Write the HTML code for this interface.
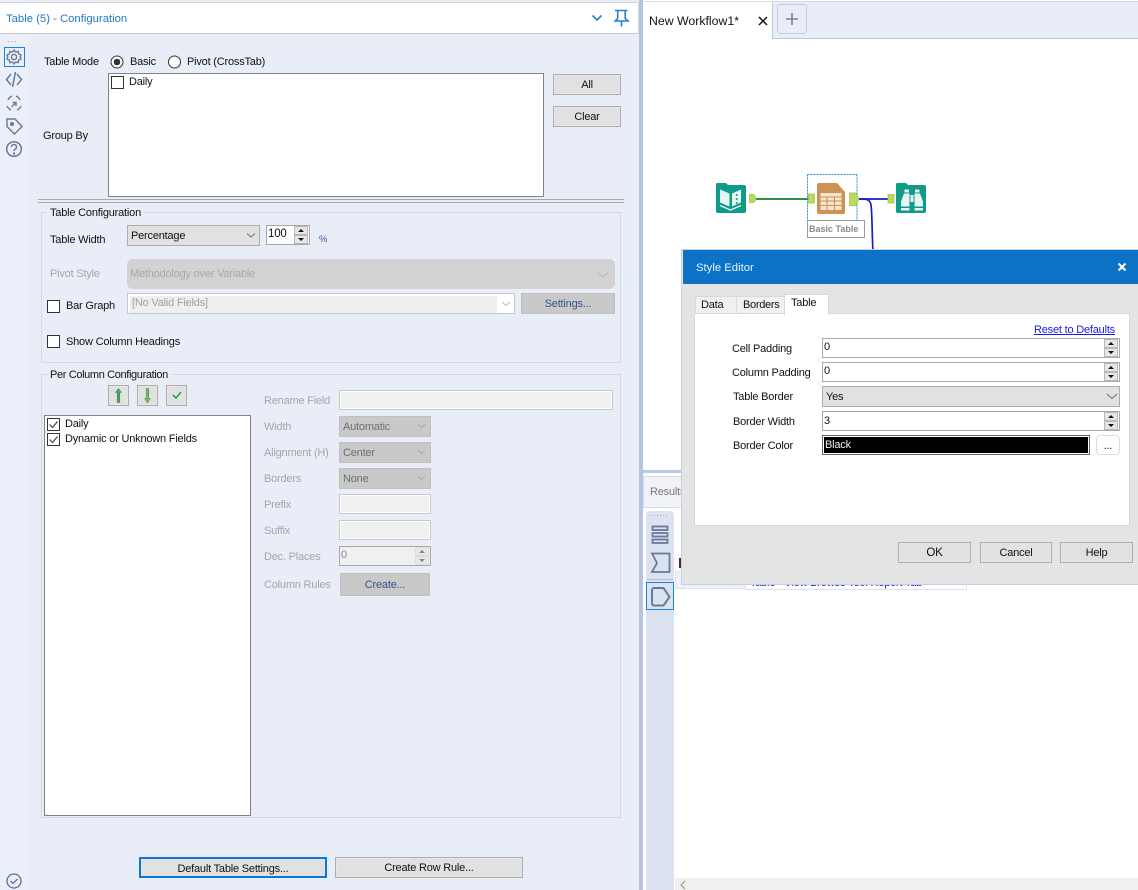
<!DOCTYPE html>
<html><head><meta charset="utf-8"><style>
html,body{margin:0;padding:0}
body{width:1138px;height:890px;position:relative;overflow:hidden;background:#fff;font-family:"Liberation Sans",sans-serif;font-size:11px;color:#111;letter-spacing:-.2px}
.b{position:absolute;box-sizing:border-box}
.t{position:absolute;white-space:nowrap;line-height:14px;margin-top:1px}
.g{color:#a5a5a5}
.btn{position:absolute;box-sizing:border-box;background:#e1e1e1;border:1px solid #adadad;text-align:center;box-shadow:inset 0 0 0 1px #e6e6e6}
.dis{position:absolute;box-sizing:border-box;background:#c9c9c9;border:1px solid #c0c0c0;color:#6f6f6f;padding-left:3px}
.in{position:absolute;box-sizing:border-box;background:#f0f0f0;border:1px solid #c8c8c8;box-shadow:inset 0 0 0 1px #fff}
.cb{position:absolute;box-sizing:border-box;width:13px;height:13px;background:#fff;border:1px solid #333}
svg{position:absolute;overflow:visible}
</style></head><body>
<!-- LEFT PANEL -->
<div class="b" style="left:0;top:0;width:639px;height:890px;background:#e9edf8"></div>
<div class="b" style="left:0;top:0;width:28px;height:890px;background:#ebeffa;border-right:1px solid #eef1fa"></div>
<div class="b" style="left:0;top:2px;width:639px;height:32px;background:#fff;border-top:1px solid #d4d4d4;border-bottom:1px solid #c9c9c9;border-right:1px solid #d4d4d4"></div>
<div class="t" style="left:6px;top:11px;color:#1f7ac4;font-size:11.300px;letter-spacing:0">Table (5) - Configuration</div>
<svg style="left:0;top:0" width="639" height="34" fill="none" stroke="#2a7fd0" stroke-width="1.600"><path d="M592.500 15.500l4.500 4.500 4.500-4.500"/><path d="M615 10.500h12.500M617.700 10.500v8l-2.500 2.500h12.800l-2.800-2.500v-8M621.500 21v5.500"/></svg>
<div class="b" style="left:639px;top:0;width:4px;height:890px;background:#b4c4e2"></div>
<!-- side icons -->
<div class="t" style="left:7px;top:34px;color:#8a8fa0;font-size:9px;letter-spacing:1px;line-height:9px">...</div>
<div class="b" style="left:4px;top:47px;width:21px;height:20px;border:1px solid #1a84dc"></div>
<svg style="left:0;top:45px" width="28" height="120" fill="none" stroke="#6a7a96" stroke-width="1.400">
<circle cx="14" cy="12" r="2.600"/><path d="M14 5l1.500 2 2.600-.6.600 2.600 2.300 1-.8 2 .8 2-2.300 1-.6 2.600-2.600-.6-1.500 2-1.500-2-2.600.6-.6-2.600-2.300-1 .8-2-.8-2 2.300-1 .6-2.600 2.600.6z"/>
<path d="M11 29l-4.500 5.500 4.500 5.500M17 29l4.500 5.500-4.500 5.500M15.500 27l-3 15" stroke-width="1.500"/>
<path d="M8 55a7.500 7.500 0 0 1 4-4M16 51a7.500 7.500 0 0 1 4 4M21 61a7.500 7.500 0 0 1-4 4M11 65a7.500 7.500 0 0 1-4-4M11.500 62l4.500-4.500M12.500 57.500H16V61"/>
<path d="M7 74h8l7 7.500-7.500 7.500-7.500-7.500z"/><circle cx="12" cy="79" r="1.300" fill="#6a7a96"/>
<circle cx="14" cy="104" r="7.300" stroke-width="1.500"/><path d="M11.500 102a2.500 2.500 0 1 1 3.800 2.100c-1 .6-1.300 1-1.300 2"/><circle cx="14" cy="108.500" r=".5" fill="#6a7a96"/>
</svg>
<svg style="left:0;top:870px" width="28" height="20" fill="none" stroke="#5e6f90" stroke-width="1.300"><circle cx="14" cy="11" r="7"/><path d="M10.500 11l2.500 2.500 4.500-4.500"/></svg>

<div class="t" style="left:44px;top:54px">Table Mode</div>
<svg style="left:110px;top:54.500px" width="80" height="14"><circle cx="7" cy="7" r="6" fill="#fff" stroke="#333"/><circle cx="7" cy="7" r="3.300" fill="#333"/><circle cx="64.500" cy="7" r="6" fill="#fff" stroke="#333"/></svg>
<div class="t" style="left:130px;top:54px">Basic</div>
<div class="t" style="left:187px;top:54px">Pivot (CrossTab)</div>
<div class="b" style="left:108px;top:73px;width:436px;height:124px;background:#fff;border:1px solid #82828c"></div>
<div class="cb" style="left:111px;top:76px"></div>
<div class="t" style="left:129px;top:74px">Daily</div>
<div class="t" style="left:43px;top:128px">Group By</div>
<div class="btn" style="left:553px;top:74px;width:68px;height:21px;line-height:20px">All</div>
<div class="btn" style="left:553px;top:106px;width:68px;height:21px;line-height:20px">Clear</div>
<div class="b" style="left:38px;top:199px;width:586px;height:4px;border-top:1px solid #a8a8a8;border-bottom:1px solid #a8a8a8"></div>

<!-- Table Configuration -->
<div class="b" style="left:41px;top:212px;width:580px;height:151px;border:1px solid #d6d9df"></div>
<div class="t" style="left:47px;top:205px;background:#e9edf8;padding:0 3px">Table Configuration</div>
<div class="t" style="left:50px;top:232px">Table Width</div>
<div class="b" style="left:127px;top:225px;width:133px;height:21px;background:#e1e1e1;border:1px solid #adadad"></div>
<div class="t" style="left:131px;top:228px">Percentage</div>
<svg style="left:0;top:0" width="640" height="300" fill="none" stroke="#707070"><path d="M247 233.500l4 3.500 4-3.500"/></svg>
<div class="b" style="left:266px;top:225px;width:44px;height:20px;background:#fff;border:1px solid #a8a8a8"></div>
<div class="t" style="left:268px;top:226px;font-size:11.500px">100</div>
<div class="b" style="left:294px;top:226px;width:14px;height:9px;background:#e6e6e6;border:1px solid #b8b8b8"></div>
<div class="b" style="left:294px;top:235px;width:14px;height:9px;background:#e6e6e6;border:1px solid #b8b8b8"></div>
<svg style="left:294px;top:226px" width="14" height="18"><path d="M4 6h6L7 3zM4 12h6l-3 3z" fill="#111"/></svg>
<div class="t" style="left:319px;top:232px;color:#35589a;font-size:9.500px">%</div>
<div class="t g" style="left:50px;top:266px">Pivot Style</div>
<div class="b" style="left:127px;top:259px;width:488px;height:30px;background:#d2d2d2;border-radius:6px"></div>
<div class="t" style="left:130px;top:266px;color:#a8a8a8">Methodology over Variable</div>
<div class="cb" style="left:47px;top:300px"></div>
<div class="t" style="left:66px;top:298px">Bar Graph</div>
<div class="in" style="left:127px;top:293px;width:388px;height:21px;box-shadow:inset 1px 1px 0 1px #fff;background:linear-gradient(to right,#efefef 0,#efefef 369px,#fff 369px)"></div>
<div class="t" style="left:132px;top:295px;color:#a0a0a0">[No Valid Fields]</div>
<svg style="left:0;top:0" width="640" height="320" fill="none" stroke="#bbb"><path d="M598 273l5 4 5-4M502 302l4 3.500 4-3.500"/></svg>
<div class="b" style="left:521px;top:293px;width:94px;height:21px;background:#c9c9c9;border:1px solid #c0c0c0;text-align:center;line-height:20px;color:#35558f">Settings...</div>
<div class="cb" style="left:47px;top:335px"></div>
<div class="t" style="left:66px;top:334px">Show Column Headings</div>

<!-- Per Column -->
<div class="b" style="left:41px;top:374px;width:580px;height:444px;border:1px solid #d6d9df"></div>
<div class="t" style="left:47px;top:367px;background:#e9edf8;padding:0 3px;letter-spacing:-.36px">Per Column Configuration</div>
<div class="btn" style="left:108px;top:385px;width:21px;height:21px"></div>
<div class="btn" style="left:137px;top:385px;width:21px;height:21px"></div>
<div class="btn" style="left:166px;top:385px;width:21px;height:21px"></div>
<svg style="left:0;top:0" width="200" height="420"><path d="M118.500 388.500l3 4h-1.700v10h-2.600v-10h-1.700z" fill="#4da866" stroke="#2c7a3c" stroke-width=".5"/><path d="M146.200 388.500h2.600v10h1.700l-3 4.500-3-4.500h1.700z" fill="#7ab868" stroke="#3f8a3c" stroke-width=".5"/><path d="M173 395l3 3 5-6" fill="none" stroke="#0b9a2a" stroke-width="1.300"/></svg>
<div class="b" style="left:44px;top:415px;width:207px;height:401px;background:#fff;border:1px solid #82828c"></div>
<div class="cb" style="left:47px;top:418px"></div><div class="cb" style="left:47px;top:433px"></div>
<svg style="left:47px;top:418px" width="13" height="30" fill="none" stroke="#444" stroke-width="1.200"><path d="M2.500 6.500l3 3 5-6M2.500 21.500l3 3 5-6"/></svg>
<div class="t" style="left:65px;top:416px">Daily</div>
<div class="t" style="left:65px;top:431px">Dynamic or Unknown Fields</div>

<div class="t g" style="left:264px;top:393px">Rename Field</div>
<div class="in" style="left:339px;top:390px;width:274px;height:20px"></div>
<div class="t g" style="left:264px;top:419px">Width</div>
<div class="dis" style="left:339px;top:416px;width:92px;height:21px;line-height:20px">Automatic</div>
<div class="t g" style="left:264px;top:445px">Alignment (H)</div>
<div class="dis" style="left:339px;top:442px;width:92px;height:21px;line-height:20px">Center</div>
<div class="t g" style="left:264px;top:471px">Borders</div>
<div class="dis" style="left:339px;top:468px;width:92px;height:21px;line-height:20px">None</div>
<svg style="left:0;top:0" width="640" height="620" fill="none"><path d="M418 424.500l3.500 3 3.500-3M418 450.500l3.500 3 3.500-3M418 476.500l3.500 3 3.500-3" stroke="#a8a8a8"/></svg>
<div class="t g" style="left:264px;top:497px">Prefix</div>
<div class="in" style="left:339px;top:494px;width:92px;height:20px"></div>
<div class="t g" style="left:264px;top:523px">Suffix</div>
<div class="in" style="left:339px;top:520px;width:92px;height:20px"></div>
<div class="t g" style="left:264px;top:549px">Dec. Places</div>
<div class="b" style="left:339px;top:546px;width:92px;height:20px;background:#f0f0f0;border:1px solid #a8a8a8"></div>
<div class="t" style="left:341px;top:547px;color:#888">0</div>
<div class="b" style="left:415px;top:547px;width:14px;height:9px;background:#e8e8e8;border:1px solid #ddd"></div>
<div class="b" style="left:415px;top:556px;width:14px;height:9px;background:#e8e8e8;border:1px solid #ddd"></div>
<svg style="left:415px;top:547px" width="14" height="18"><path d="M4 6h6L7 3zM4 12h6l-3 3z" fill="#888"/></svg>
<div class="t g" style="left:264px;top:577px">Column Rules</div>
<div class="b" style="left:340px;top:573px;width:90px;height:23px;background:#c9c9c9;border:1px solid #c0c0c0;text-align:center;line-height:23px;color:#35558f">Create...</div>

<div class="b" style="left:139px;top:857px;width:188px;height:21px;background:#e1e1e1;border:2px solid #0b78d7;text-align:center;line-height:20px">Default Table Settings...</div>
<div class="btn" style="left:335px;top:857px;width:188px;height:21px;line-height:21px">Create Row Rule...</div>

<!-- RIGHT -->
<div class="b" style="left:643px;top:1px;width:495px;height:38px;background:#e9edf8;border-top:1px solid #d8dce6;border-bottom:1px solid #b9c8e4"></div>
<div class="b" style="left:643px;top:2px;width:130px;height:37px;background:#fff;border-right:1px solid #b9c8e4"></div>
<div class="t" style="left:649px;top:13px;font-size:12.300px;color:#111;letter-spacing:0">New Workflow1*</div>
<svg style="left:757px;top:15px" width="12" height="12"><path d="M2 2l8 8M10 2l-8 8" stroke="#111" stroke-width="1.500"/></svg>
<div class="b" style="left:777px;top:4px;width:30px;height:30px;border:1px solid #c4cee2;border-radius:3px"></div>
<svg style="left:777px;top:4px" width="30" height="30"><path d="M15 9v12M9 15h12" stroke="#7a8392" stroke-width="1.600"/></svg>

<!-- canvas tools -->
<svg style="left:700px;top:170px" width="240" height="85">
<path d="M16 14.500a1.500 1.500 0 0 1 1.500-1.500H26l2 2h16a2 2 0 0 1 2 2V41a2 2 0 0 1-2 2H18a2 2 0 0 1-2-2z" fill="#0f9a8a"/>
<path d="M20 19.500l9.500 4v13l-9.500-4zM32 23.500l9-4v13l-9 4z" fill="#e4f5f2"/><g fill="#0f9a8a"><circle cx="36.700" cy="25" r="1"/><circle cx="36.700" cy="29" r="1"/><circle cx="36.700" cy="33" r="1"/></g>
<path d="M20 35.500l10.500 4.500 10.500-4.500" fill="none" stroke="#e4f5f2" stroke-width="1.300"/>
<path d="M49.500 24.500h4.500l2.500 4.500-2.500 3.500h-4.500z" fill="#bbd861" stroke="#9dbb48" stroke-width=".7"/>
<path d="M56 29h53" stroke="#2f9148" stroke-width="2"/>
<path d="M109 29h5" stroke="#2222cc" stroke-width="1.500"/>
<rect x="108.500" y="24" width="6" height="9" fill="#bbd861" stroke="#9dbb48" stroke-width=".7"/>
<path d="M107.500 4.500H157M107.500 4.500V50M157 4.500V50" stroke="#2a8ae0" stroke-dasharray="2 1" fill="none"/>
<path d="M119 13h18l8 9v20a2 2 0 0 1-2 2h-24a2 2 0 0 1-2-2V15a2 2 0 0 1 2-2z" fill="#cf9155"/>
<rect x="120.500" y="23" width="21" height="17" fill="#f5e4cf"/><path d="M120.500 27h21M120.500 31h21M120.500 35.500h21M127 27v13M134.500 27v13" stroke="#cf9155"/>
<path d="M149.500 23h6.500l3 6-3 6.500h-6.500z" fill="#bbd861" stroke="#9dbb48" stroke-width=".7"/>
<path d="M159 29h30" stroke="#1c1ccc" stroke-width="1.700"/>
<path d="M160 29c6 0 10 0 11 6 1 6 1 25 2 49" fill="none" stroke="#1c1ccc" stroke-width="1.700"/>
<rect x="188" y="24.500" width="6" height="8.500" fill="#bbd861" stroke="#9dbb48" stroke-width=".7"/>
<path d="M196 14.500a1.500 1.500 0 0 1 1.500-1.500H206l2 2h16a2 2 0 0 1 2 2V41a2 2 0 0 1-2 2h-26a2 2 0 0 1-2-2z" fill="#0f9a8a"/>
<path d="M204.500 19.500h4.500v3h-4.500zM215 19.500h4.500v3H215zM204 23.500h5.500v13H201v-5zM214.500 23.500h5.500l3 8v5h-8.500zM210.500 25h3v7h-3zM201 38h8.500v2.500H201zM214.500 38h8.500v2.500h-8.500z" fill="#e8f6f3"/>
</svg>
<div class="b" style="left:807px;top:220px;width:58px;height:18px;background:#fff;border:1px solid #9a9a9a;font-size:9px;font-weight:bold;color:#8a8a8a;line-height:16px;padding-left:1px;white-space:nowrap;letter-spacing:0">Basic Table</div>

<!-- bottom right -->
<div class="b" style="left:643px;top:470px;width:495px;height:420px;background:#fff;border-top:3px solid #b9c8e4"></div>
<div class="b" style="left:643px;top:476px;width:45px;height:32px;background:#f2f3f8;border:1px solid #d9dce6"></div>
<div class="t" style="left:650px;top:484px;color:#777">Results</div>
<div class="b" style="left:646px;top:511px;width:28px;height:379px;background:#dce3f0;border-radius:4px 4px 0 0"></div>
<div class="t" style="left:650px;top:509px;color:#888;font-size:8px;letter-spacing:.9px;line-height:8px">......</div>
<svg style="left:646px;top:520px" width="29" height="95" fill="none" stroke="#6a7a9a" stroke-width="1.800">
<rect x="6.500" y="6.500" width="15" height="3.500"/><rect x="6.500" y="13" width="15" height="3.500"/><rect x="6.500" y="19.500" width="15" height="3.500"/>
<path d="M6 33.500h17.500V52H6l5-9z"/>
<path d="M6 70a2 2 0 0 1 2-2h9.500l6 9-6 8.500H8a2 2 0 0 1-2-2z" stroke-width="2"/>
</svg>
<div class="b" style="left:646px;top:582px;width:28px;height:28px;border:1px solid #1a84dc"></div>
<div class="b" style="left:647px;top:579px;width:26px;height:1px;background:#b8bfcc"></div>
<div class="b" style="left:675px;top:554px;width:71px;height:35px;background:#eef1f9;border:1px solid #dde3f0"></div>
<div class="b" style="left:675px;top:554px;width:7px;height:18px;background:#f8f9fc;border-bottom:1px solid #dde3f0"></div>
<div class="b" style="left:679px;top:558px;width:2px;height:10px;background:#4a2a2a"></div>
<div class="b" style="left:745px;top:570px;width:222px;height:20px;background:#fff;border:1px solid #dde3f0"></div>
<div class="t" style="left:750px;top:575px;color:#1a1ac8;white-space:nowrap">Table - View Browse Tool Report Tab</div>
<div class="b" style="left:675px;top:878px;width:463px;height:12px;background:#f0f0f0"></div>
<svg style="left:679px;top:880px" width="8" height="10"><path d="M6 1L2 5l4 4" fill="none" stroke="#999" stroke-width="1.200"/></svg>

<!-- Dialog -->
<div class="b" style="left:681px;top:249px;width:457px;height:336px;background:#e4e4e4;border:1px solid #c4d0e6;border-right:none"></div>
<div class="b" style="left:683px;top:250px;width:455px;height:34px;background:#0b72c6"></div>
<div class="t" style="left:696px;top:260px;color:#eaf2fb;font-size:11.300px;letter-spacing:0">Style Editor</div>
<svg style="left:1117px;top:262px" width="10" height="10"><path d="M1.500 1.500l7 7M8.500 1.500l-7 7" stroke="#fff" stroke-width="2"/></svg>
<div class="b" style="left:695px;top:296px;width:42px;height:18px;background:#f0f0f0;border:1px solid #d9d9d9"></div>
<div class="b" style="left:736px;top:296px;width:49px;height:18px;background:#f0f0f0;border:1px solid #d9d9d9"></div>
<div class="b" style="left:694px;top:313px;width:436px;height:213px;background:#fff;border:1px solid #d9d9d9"></div>
<div class="b" style="left:784px;top:294px;width:45px;height:21px;background:#fff;border:1px solid #d9d9d9;border-bottom:none"></div>
<div class="t" style="left:701px;top:297px">Data</div>
<div class="t" style="left:743px;top:297px;letter-spacing:-.3px">Borders</div>
<div class="t" style="left:791px;top:295px">Table</div>
<div class="t" style="left:1034px;top:322px;color:#1a1ae6;text-decoration:underline">Reset to Defaults</div>
<div class="t" style="left:732px;top:341px">Cell Padding</div>
<div class="t" style="left:732px;top:365px">Column Padding</div>
<div class="t" style="left:733px;top:389px">Table Border</div>
<div class="t" style="left:733px;top:414px">Border Width</div>
<div class="t" style="left:733px;top:438px">Border Color</div>
<div class="b" style="left:822px;top:338px;width:298px;height:20px;background:#fff;border:1px solid #a8a8a8"></div>
<div class="b" style="left:822px;top:362px;width:298px;height:20px;background:#fff;border:1px solid #a8a8a8"></div>
<div class="b" style="left:822px;top:386px;width:298px;height:21px;background:#e1e1e1;border:1px solid #adadad"></div>
<div class="b" style="left:822px;top:411px;width:298px;height:20px;background:#fff;border:1px solid #a8a8a8"></div>
<div class="t" style="left:824px;top:339px">0</div>
<div class="t" style="left:824px;top:363px">0</div>
<div class="t" style="left:826px;top:389px">Yes</div>
<div class="t" style="left:824px;top:413px">3</div>
<div class="b" style="left:1104px;top:339px;width:14px;height:9px;background:#e6e6e6;border:1px solid #b8b8b8"></div><div class="b" style="left:1104px;top:348px;width:14px;height:9px;background:#e6e6e6;border:1px solid #b8b8b8"></div>
<div class="b" style="left:1104px;top:363px;width:14px;height:9px;background:#e6e6e6;border:1px solid #b8b8b8"></div><div class="b" style="left:1104px;top:372px;width:14px;height:9px;background:#e6e6e6;border:1px solid #b8b8b8"></div>
<div class="b" style="left:1104px;top:412px;width:14px;height:9px;background:#e6e6e6;border:1px solid #b8b8b8"></div><div class="b" style="left:1104px;top:421px;width:14px;height:9px;background:#e6e6e6;border:1px solid #b8b8b8"></div>
<svg style="left:1104px;top:339px" width="14" height="100"><path d="M4 6h6L7 3zM4 12h6l-3 3zM4 30h6l-3-3zM4 36h6l-3 3zM4 79h6l-3-3zM4 85h6l-3 3z" fill="#111"/></svg>
<svg style="left:1106px;top:393px" width="12" height="8"><path d="M1 1l5 4.500L11 1" fill="none" stroke="#707070"/></svg>
<div class="b" style="left:822px;top:435px;width:268px;height:20px;background:#000;border:1px solid #666;box-shadow:inset 0 0 0 1px #fff"></div>
<div class="t" style="left:825px;top:437px;color:#f0f0f0">Black</div>
<div class="b" style="left:1096px;top:435px;width:24px;height:20px;background:#fdfdfd;border:1px solid #d4dcec;border-radius:4px;text-align:center;line-height:20px">...</div>
<div class="btn" style="left:898px;top:542px;width:73px;height:21px;line-height:21px;font-size:11.500px">OK</div>
<div class="btn" style="left:980px;top:542px;width:72px;height:21px;line-height:21px">Cancel</div>
<div class="btn" style="left:1060px;top:542px;width:73px;height:21px;line-height:21px">Help</div>
</body></html>
